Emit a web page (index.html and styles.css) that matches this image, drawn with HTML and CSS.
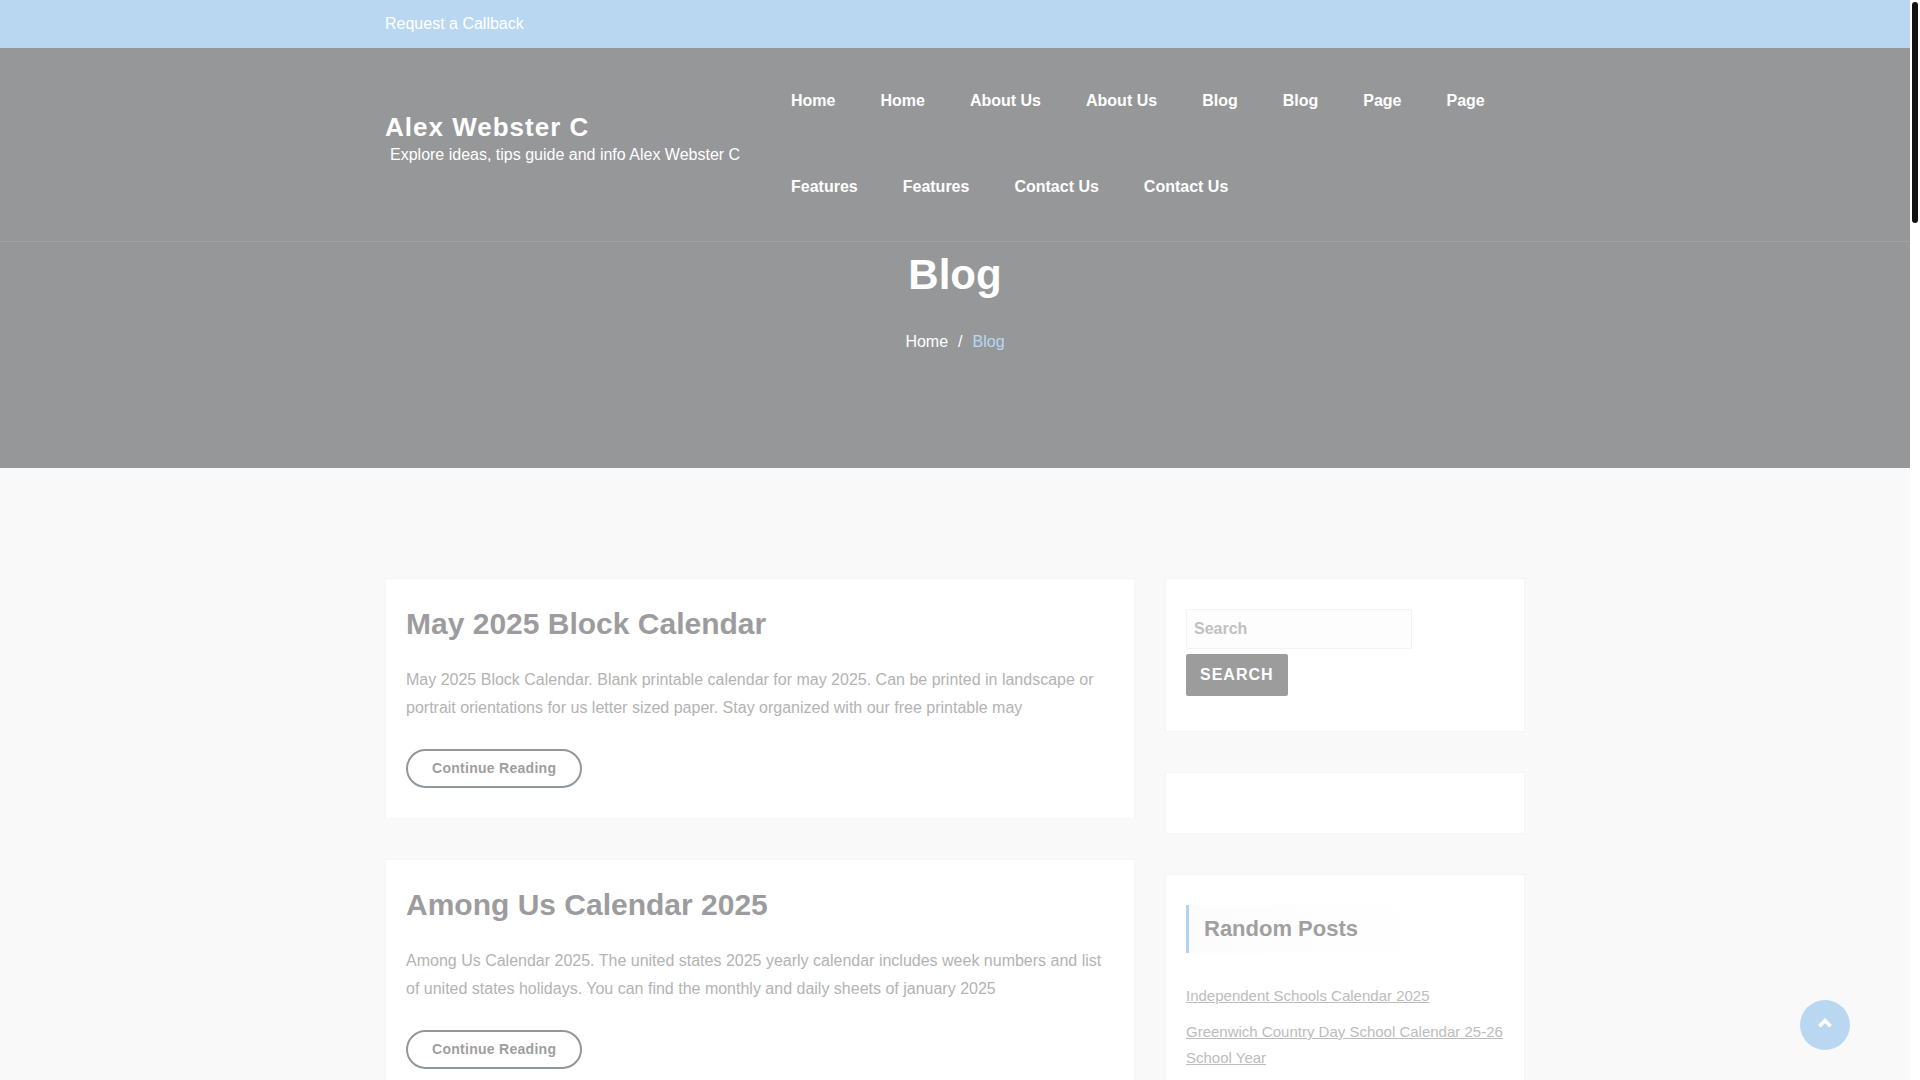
FILE: index.html
```
<!DOCTYPE html>
<html lang="en">
<head>
    <meta charset="UTF-8">
    <meta name="viewport" content="width=device-width, initial-scale=1">
    <title>Blog - Alex Webster C</title>
    <link rel="stylesheet" href="styles.css">
</head>
<body>
    <div class="top-bar">
        <div class="container">
            <a href="#">Request a Callback</a>
        </div>
    </div>

    <div class="hero">
        <header class="site-header">
            <div class="container header-inner">
                <div class="brand">
                    <a href="#" class="site-title">Alex Webster C</a>
                    <p class="site-description">Explore ideas, tips guide and info Alex Webster C</p>
                </div>
                <nav>
                    <ul class="menu">
                        <li><a href="#">Home</a></li>
                        <li><a href="#">Home</a></li>
                        <li><a href="#">About Us</a></li>
                        <li><a href="#">About Us</a></li>
                        <li><a href="#">Blog</a></li>
                        <li><a href="#">Blog</a></li>
                        <li><a href="#">Page</a></li>
                        <li><a href="#">Page</a></li>
                        <li><a href="#">Features</a></li>
                        <li><a href="#">Features</a></li>
                        <li><a href="#">Contact Us</a></li>
                        <li><a href="#">Contact Us</a></li>
                    </ul>
                </nav>
            </div>
        </header>
        <div class="page-title">
            <h1>Blog</h1>
            <ul class="breadcrumb">
                <li><a href="#">Home</a></li>
                <li>/</li>
                <li class="active">Blog</li>
            </ul>
        </div>
    </div>

    <div class="container content">
        <main class="column">
            <article class="card post">
                <h2><a href="#">May 2025 Block Calendar</a></h2>
                <p>May 2025 Block Calendar. Blank printable calendar for may 2025. Can be printed in landscape or portrait orientations for us letter sized paper. Stay organized with our free printable may</p>
                <a href="#" class="more-link">Continue Reading</a>
            </article>
            <article class="card post">
                <h2><a href="#">Among Us Calendar 2025</a></h2>
                <p>Among Us Calendar 2025. The united states 2025 yearly calendar includes week numbers and list of united states holidays. You can find the monthly and daily sheets of january 2025</p>
                <a href="#" class="more-link">Continue Reading</a>
            </article>
        </main>

        <aside class="column">
            <section class="card widget">
                <form class="search-form">
                    <input type="search" placeholder="Search" aria-label="Search">
                    <button type="submit">SEARCH</button>
                </form>
            </section>
            <section class="card widget"></section>
            <section class="card widget widget-last">
                <h3>Random Posts</h3>
                <ul class="post-list">
                    <li><a href="#">Independent Schools Calendar 2025</a></li>
                    <li><a href="#">Greenwich Country Day School Calendar 25-26 School Year</a></li>
                </ul>
            </section>
        </aside>
    </div>

    <button class="scroll-up" aria-label="Back to top">
        <svg width="16" height="12" viewBox="0 0 16 12"><path d="M2.4 9.2 8 3.6l5.6 5.6" fill="none" stroke="#fff" stroke-width="3.6"/></svg>
    </button>
    <div class="scroll-track"><div class="scroll-thumb"></div></div>
</body>
</html>
```
FILE: styles.css
```
* { box-sizing: border-box; }
html { scrollbar-width: none; }
body { margin: 0; padding-right: 10px; background: #f9f9f9; color: #b3b3b3; font-family: "Liberation Sans", Arial, sans-serif; font-size: 16px; line-height: 28px; }
h1, h2, h3, p, ul { margin: 0; padding: 0; }
ul { list-style: none; }
a { color: inherit; text-decoration: none; }
.container { max-width: 1140px; margin: 0 auto; }

/* top bar */
.top-bar { background: #b9d7f1; color: #fff; padding: 10px 0; }

/* header */
.hero { background: #969799; color: #fff; }
.site-header { border-bottom: 1px solid #a0a1a3; padding: 10px 0 11px; }
.header-inner { display: grid; grid-template-columns: 406px 1fr; align-items: center; }
.brand { padding-bottom: 6px; }
.site-title { display: block; font-size: 26px; line-height: 28px; font-weight: bold; letter-spacing: 1px; }
.site-description { padding-left: 5px; line-height: 28px; }
.menu { display: flex; flex-wrap: wrap; column-gap: 45px; font-weight: bold; }
.menu a { display: block; line-height: 86px; }
.page-title { padding: 6px 0 112px; text-align: center; }
.page-title h1 { font-size: 42px; line-height: 54px; margin-bottom: 26px; }
.breadcrumb { display: flex; justify-content: center; gap: 10px; }
.breadcrumb .active { color: #b9d7f1; }

/* content */
.content { display: grid; grid-template-columns: 750fr 360fr; gap: 30px; padding: 110px 0; }
.column { display: flex; flex-direction: column; gap: 40px; }
.card { background: #fff; border: 1px solid #f5f5f5; padding: 30px 20px; }
.post { padding: 26px 20px 30px; }
.post h2 { color: #9c9c9e; font-size: 30px; line-height: 38px; margin-bottom: 23px; }
.post p { margin-bottom: 27px; }
.more-link { display: inline-block; vertical-align: top; border: 2px solid #92979b; border-radius: 20px; padding: 0 24px; color: #9e9e9e; font-size: 14px; line-height: 35px; font-weight: bold; letter-spacing: 0.02em; }

/* sidebar */
.search-form { display: flex; flex-direction: column; align-items: flex-start; gap: 5px; padding-bottom: 5px; }
.search-form input { width: 226px; height: 40px; padding: 0 7px; border: 1px solid #f2f2f2; border-radius: 2px; background: #fdfdfd; font: inherit; font-weight: bold; }
.search-form input::placeholder { color: #c1c1c1; }
.search-form button { height: 42px; padding: 0 14px; border: 0; border-radius: 2px; background: #9c9c9c; color: #fff; font: inherit; font-weight: bold; letter-spacing: 1px; cursor: pointer; }
.widget-last { flex: 1; }
.widget h3 { border-left: 3px solid #b3d4f1; background: linear-gradient(to right, #fcfcfc, #fff 80%); padding-left: 15px; margin-bottom: 30px; color: #a0a0a0; font-size: 22px; line-height: 48px; }
.post-list { color: #bcbcbc; font-size: 15px; line-height: 26px; }
.post-list li { margin-bottom: 10px; }
.post-list a { text-decoration: underline; }

.scroll-up { position: fixed; right: 70px; bottom: 30px; width: 50px; height: 50px; padding: 0; border: 0; border-radius: 50%; background: #b9d7f1; cursor: pointer; display: flex; align-items: center; justify-content: center; }
.scroll-up svg { margin-bottom: 4px; }
.scroll-track { position: fixed; top: 0; right: 0; bottom: 0; width: 10px; padding: 2px; background: #fff; }
.scroll-thumb { height: 221px; border-radius: 3px; background: #111; }
```
